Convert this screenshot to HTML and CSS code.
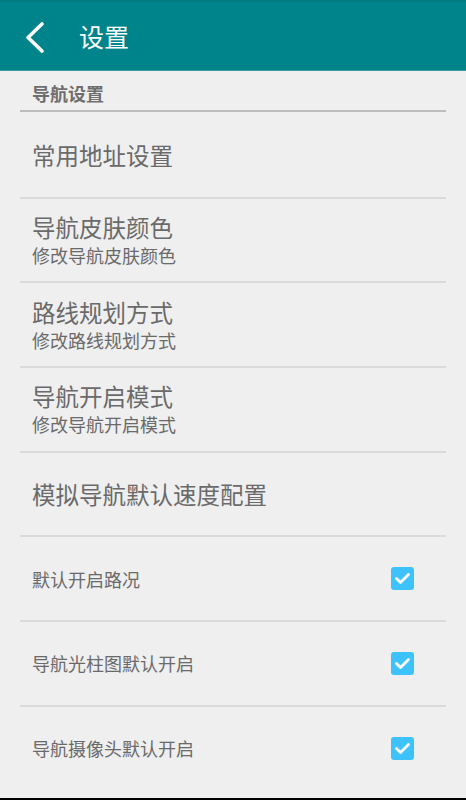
FILE: index.html
```html
<!DOCTYPE html>
<html lang="zh-CN">
<head>
<meta charset="utf-8">
<title>设置</title>
<link rel="stylesheet" href="styles.css">
</head>
<body>
<div class="page">
  <header class="appbar">
    <svg class="back" width="24" height="36" viewBox="0 0 24 36">
      <polyline points="17,5 3,18.5 17,32" fill="none" stroke="#fff" stroke-width="3.6" stroke-linecap="round" stroke-linejoin="round"/>
    </svg>
    <h1 class="title">设置</h1>
  </header>
  <div class="section">导航设置</div>
  <ul class="list">
    <li class="item"><div class="text"><div class="main">常用地址设置</div></div></li>
    <li class="item"><div class="text"><div class="main">导航皮肤颜色</div><div class="sub">修改导航皮肤颜色</div></div></li>
    <li class="item"><div class="text"><div class="main">路线规划方式</div><div class="sub">修改路线规划方式</div></div></li>
    <li class="item"><div class="text"><div class="main">导航开启模式</div><div class="sub">修改导航开启模式</div></div></li>
    <li class="item"><div class="text"><div class="main">模拟导航默认速度配置</div></div></li>
    <li class="item"><div class="text"><div class="small">默认开启路况</div></div>
      <span class="check"><svg width="23" height="23" viewBox="0 0 23 23"><polyline points="5.5,11.5 9.5,15.5 17.5,7.5" fill="none" stroke="#fff" stroke-width="2.8" stroke-linecap="round" stroke-linejoin="round"/></svg></span></li>
    <li class="item"><div class="text"><div class="small">导航光柱图默认开启</div></div>
      <span class="check"><svg width="23" height="23" viewBox="0 0 23 23"><polyline points="5.5,11.5 9.5,15.5 17.5,7.5" fill="none" stroke="#fff" stroke-width="2.8" stroke-linecap="round" stroke-linejoin="round"/></svg></span></li>
    <li class="item last"><div class="text"><div class="small">导航摄像头默认开启</div></div>
      <span class="check"><svg width="23" height="23" viewBox="0 0 23 23"><polyline points="5.5,11.5 9.5,15.5 17.5,7.5" fill="none" stroke="#fff" stroke-width="2.8" stroke-linecap="round" stroke-linejoin="round"/></svg></span></li>
  </ul>
</div>
</body>
</html>
```
FILE: styles.css
```css
html {
  background: #000;
}
body {
  margin: 0;
  font-family: "Noto Sans CJK SC", "Noto Sans", sans-serif;
  color: #6a6a6a;
}
.page {
  height: 798px;
  background: #efefef;
  overflow: hidden;
}
.appbar {
  box-sizing: border-box;
  height: 71px;
  background: #00848b;
  border-top: 2px solid #017a80;
  border-bottom: 1px solid #2f9ea4;
  display: flex;
  align-items: center;
  padding-left: 25px;
}
.back {
  display: block;
  margin-top: 1px;
}
.title {
  margin: 0 0 0 30px;
  font-size: 25px;
  font-weight: normal;
  color: #fff;
  line-height: 1;
}
.section {
  margin: 0 20px 0 20px;
  padding: 10px 0 0 12px;
  height: 29px;
  border-bottom: 2px solid #bdbdbd;
  font-size: 18px;
  font-weight: bold;
  color: #6e6e6e;
  line-height: 24px;
}
.list {
  list-style: none;
  margin: 2px 20px 0 20px;
  padding: 0;
}
.item {
  box-sizing: border-box;
  height: 84.7px;
  border-bottom: 2px solid #dadada;
  display: flex;
  align-items: center;
  justify-content: space-between;
  padding: 0 32px 0 12px;
}
.item.last {
  border-bottom: none;
  height: 82.7px;
}
.main {
  font-size: 23.5px;
  line-height: 31px;
}
.sub {
  font-size: 18px;
  line-height: 25px;
}
.small {
  font-size: 18px;
  line-height: 24px;
}
.check {
  width: 23px;
  height: 23px;
  border-radius: 3px;
  background: #3ec2fb;
  display: flex;
}
```
